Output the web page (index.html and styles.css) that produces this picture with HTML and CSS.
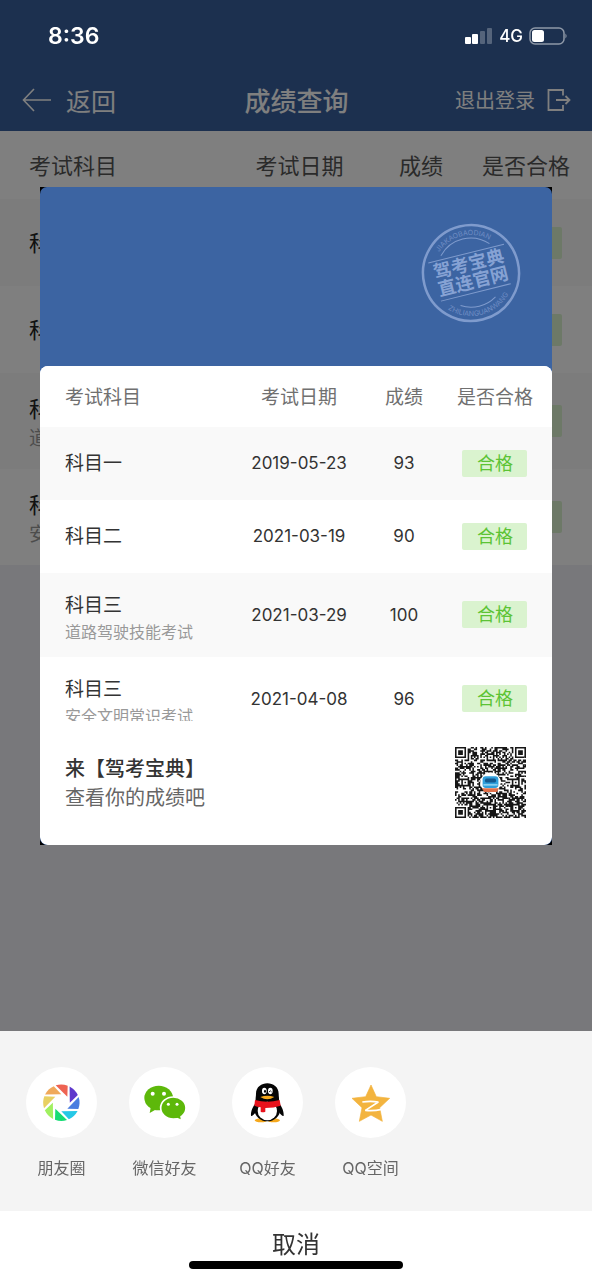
FILE: index.html
```html
<!DOCTYPE html>
<html lang="zh-CN">
<head>
<meta charset="utf-8">
<meta name="viewport" content="width=device-width, initial-scale=1">
<title>成绩查询</title>
<link rel="stylesheet" href="styles.css">
</head>
<body>
<div class="page">
  <header class="topbar">
    <div class="status">
      <span class="status-time">8:36</span>
      <div class="status-right">
        <svg class="signal" viewBox="0 0 28 18" aria-hidden="true">
          <rect x="0" y="10" width="6" height="7" rx="1" fill="#fff"/>
          <rect x="7" y="7" width="6" height="10" rx="1" fill="#fff"/>
          <rect x="15" y="4" width="5" height="13" rx="1" fill="#fff" opacity=".25"/>
          <rect x="22" y="1" width="5" height="16" rx="1" fill="#fff" opacity=".25"/>
        </svg>
        <span class="network">4G</span>
        <svg class="battery" viewBox="0 0 39 18" aria-hidden="true">
          <rect x="1" y="1" width="34" height="16" rx="5" fill="none" stroke="#fff" stroke-opacity=".5" stroke-width="1.5"/>
          <rect x="3" y="3" width="12" height="12" rx="2.5" fill="#fff"/>
          <path d="M36.5 6.5q2 2.500 0 5z" fill="#fff" opacity=".6"/>
        </svg>
      </div>
    </div>
    <nav class="nav">
      <a class="nav-back" href="#">
        <svg class="back-icon" viewBox="0 0 30 24" aria-hidden="true"><path d="M12 1 1.500 12 12 23M1.500 12H29" fill="none" stroke="currentColor" stroke-width="1.600"/></svg>
        返回
      </a>
      <h1 class="nav-title">成绩查询</h1>
      <a class="nav-exit" href="#">
        退出登录
        <svg class="exit-icon" viewBox="0 0 24 24" aria-hidden="true"><path d="M16 7.500V2H1.500v20H16v-5M9 12h13M18.500 8l4 4-4 4" fill="none" stroke="currentColor" stroke-width="1.800"/></svg>
      </a>
    </nav>
  </header>

  <table class="scores scores-page">
    <thead>
      <tr><th class="c-subject">考试科目</th><th class="c-date">考试日期</th><th class="c-score">成绩</th><th class="c-pass">是否合格</th></tr>
    </thead>
    <tbody>
      <tr><td>科目一</td><td>2019-05-23</td><td>93</td><td><span class="badge">合格</span></td></tr>
      <tr><td>科目二</td><td>2021-03-19</td><td>90</td><td><span class="badge">合格</span></td></tr>
      <tr class="tall"><td>科目三<small>道路驾驶技能考试</small></td><td>2021-03-29</td><td>100</td><td><span class="badge">合格</span></td></tr>
      <tr class="tall"><td>科目三<small>安全文明常识考试</small></td><td>2021-04-08</td><td>96</td><td><span class="badge">合格</span></td></tr>
    </tbody>
  </table>
</div>

<div class="overlay">
  <div class="stage">
    <section class="poster" aria-label="成绩单">
      <div class="poster-inner">
        <div class="poster-top">
          <svg class="stamp" viewBox="-50 -50 100 100" role="img" aria-label="驾考宝典 直连官网">
            <defs>
              <path id="arc-top" d="M-38 0A38 38 0 0 1 38 0"/>
              <path id="arc-bottom" d="M-43 0A43 43 0 0 0 43 0"/>
            </defs>
            <g transform="rotate(-14)">
              <circle r="48" fill="none" stroke="#7f9bcd" stroke-width="2.500"/>
              <path d="M-25 -24A34 34 0 0 1 25 -24M-18 29A34 34 0 0 0 18 29M-39 -20H39M-36 20H36" fill="none" stroke="#7f9bcd" stroke-width="1"/>
              <text class="stamp-text" y="-3">驾考宝典</text>
              <text class="stamp-text" y="15">直连官网</text>
              <text class="stamp-ring"><textPath href="#arc-top" startOffset="50%">JIAKAOBAODIAN</textPath></text>
              <text class="stamp-ring"><textPath href="#arc-bottom" startOffset="50%">ZHILIANGUANWANG</textPath></text>
            </g>
          </svg>
        </div>
        <div class="poster-card">
          <div class="poster-clip">
            <table class="scores scores-card">
              <thead>
                <tr><th class="c-subject">考试科目</th><th class="c-date">考试日期</th><th class="c-score">成绩</th><th class="c-pass">是否合格</th></tr>
              </thead>
              <tbody>
                <tr><td>科目一</td><td>2019-05-23</td><td>93</td><td><span class="badge">合格</span></td></tr>
                <tr><td>科目二</td><td>2021-03-19</td><td>90</td><td><span class="badge">合格</span></td></tr>
                <tr class="tall"><td>科目三<small>道路驾驶技能考试</small></td><td>2021-03-29</td><td>100</td><td><span class="badge">合格</span></td></tr>
                <tr class="tall"><td>科目三<small>安全文明常识考试</small></td><td>2021-04-08</td><td>96</td><td><span class="badge">合格</span></td></tr>
              </tbody>
            </table>
          </div>
          <div class="poster-foot">
            <div class="invite">
              <strong>来【驾考宝典】</strong>
              <span>查看你的成绩吧</span>
            </div>
            <svg class="qr" viewBox="0 0 45 45" role="img" aria-label="二维码">
              <path id="qr-modules" fill="#161616"/>
              <circle cx="22.500" cy="22.500" r="6.500" fill="#fff"/>
              <rect x="17.500" y="18.500" width="10" height="7.500" rx="2" fill="#2f9fdc"/>
              <rect x="19" y="20" width="7" height="2.500" rx="1" fill="#14598f"/>
              <rect x="18" y="23.500" width="9" height="1" fill="#8fd3f2"/>
              <path d="M17 26.200h11l-1.500 2.300h-8z" fill="#e0704a"/>
            </svg>
          </div>
        </div>
      </div>
    </section>
  </div>

  <section class="sheet" aria-label="分享">
    <div class="share-list">
      <button class="share" type="button">
        <span class="share-icon">
          <svg viewBox="0 0 213 213" aria-hidden="true">
            <defs><path id="blade" d="M-17 -52A55 55 0 0 1 19 -51L18 -18Z"/></defs>
            <g transform="translate(106 107)">
              <use href="#blade" fill="#ee6352"/>
              <use href="#blade" fill="#5e38cc" transform="rotate(45)"/>
              <use href="#blade" fill="#4a7de0" transform="rotate(90)"/>
              <use href="#blade" fill="#26c8e6" transform="rotate(135)"/>
              <use href="#blade" fill="#16dc74" transform="rotate(180)"/>
              <use href="#blade" fill="#a0f060" transform="rotate(225)"/>
              <use href="#blade" fill="#e8d062" transform="rotate(270)"/>
              <use href="#blade" fill="#f0a95a" transform="rotate(315)"/>
            </g>
          </svg>
        </span>
        朋友圈
      </button>
      <button class="share" type="button">
        <span class="share-icon">
          <svg viewBox="0 0 213 213" aria-hidden="true">
            <g fill="#5db80a">
              <path d="M66 118l-4 20 20-11z"/>
              <ellipse cx="89" cy="93" rx="43" ry="37"/>
              <ellipse cx="133" cy="123" rx="38" ry="33" stroke="#fff" stroke-width="5"/>
              <path d="M140 150l15 7-2-14z"/>
            </g>
            <g fill="#fff"><circle cx="71" cy="80" r="6"/><circle cx="105" cy="80" r="6"/><circle cx="118" cy="112" r="4.500"/><circle cx="144" cy="112" r="4.500"/></g>
          </svg>
        </span>
        微信好友
      </button>
      <button class="share" type="button">
        <span class="share-icon">
          <svg viewBox="0 0 213 213" aria-hidden="true">
            <ellipse cx="87" cy="160" rx="19" ry="6" fill="#f5a81c"/>
            <ellipse cx="125" cy="160" rx="19" ry="6" fill="#f5a81c"/>
            <path d="M72 108C62 118 56 134 57 146c2 3 8-3 13-9zM140 108c10 10 16 26 15 38-2 3-8-3-13-9z" fill="#050505"/>
            <ellipse cx="106" cy="126" rx="39" ry="37" fill="#050505"/>
            <path d="M71 104C70 94 72 88 72 80c0-42 68-42 68 0 0 8 2 14 1 24z" fill="#050505"/>
            <ellipse cx="106" cy="132" rx="29" ry="28" fill="#fff"/>
            <ellipse cx="97" cy="72" rx="7" ry="9.500" fill="#fff"/><ellipse cx="115" cy="72" rx="7" ry="9.500" fill="#fff"/>
            <ellipse cx="99" cy="73" rx="3" ry="4.500" fill="#050505"/><path d="M111 75q4-7 8 0" fill="none" stroke="#050505" stroke-width="2.500"/>
            <path d="M85 90q21-8 42 0-21 14-42 0z" fill="#f5a81c"/>
            <path d="M69 99q37 10 74 0l3 17q-20 7-46 7v11q-8 3-14 0v-13q-11-1-19-5z" fill="#e8121c"/>
          </svg>
        </span>
        QQ好友
      </button>
      <button class="share" type="button">
        <span class="share-icon">
          <svg viewBox="0 0 213 213" aria-hidden="true">
            <path d="M108 54l16 35 40 5-30 28 8 41-34-19-35 19 8-41-30-28 41-5z" fill="#f3b43f" stroke="#f3b43f" stroke-width="2" stroke-linejoin="round"/>
            <path d="M82 105q24-4 48 0L91 130q24 3 49-3" fill="none" stroke="#fff" stroke-width="5" stroke-linejoin="bevel"/>
          </svg>
        </span>
        QQ空间
      </button>
    </div>
    <button class="cancel" type="button">取消</button>
    <div class="home-indicator"></div>
  </section>
</div>
<script src="script.js"></script>
</body>
</html>
```

FILE: styles.css
```css
* { box-sizing: border-box; }

body {
  margin: 0;
  font-family: Inter, "Noto Sans CJK SC", sans-serif;
  color: #333;
}

a { color: inherit; text-decoration: none; }
button { border: 0; padding: 0; background: none; font: inherit; color: inherit; }
svg { display: block; }

.page { min-height: 100vh; background: #f0f0f6; }

/* top bar */
.topbar { background: #38609e; color: #fff; }

.status {
  position: relative;
  z-index: 2;
  display: flex;
  align-items: center;
  justify-content: space-between;
  height: 70px;
  padding: 2px 24px 0 48px;
}
.status-time { font-size: 23px; font-weight: 600; }
.status-right { display: flex; align-items: center; gap: 6px; }
.network { font-size: 17px; font-weight: 500; }
.signal { width: 28px; height: 18px; }
.battery { width: 39px; height: 18px; }

.nav {
  display: grid;
  grid-template-columns: 1fr auto 1fr;
  align-items: center;
  height: 61px;
  padding: 0 21px 2px 22px;
}
.nav-back { display: flex; align-items: center; gap: 14px; font-size: 25px; }
.back-icon { width: 30px; height: 24px; }
.nav-title { margin: 0; font-size: 26px; font-weight: 500; }
.nav-exit { display: flex; align-items: center; justify-content: flex-end; gap: 12px; font-size: 20px; }
.exit-icon { width: 24px; height: 24px; }

/* score tables */
.scores {
  width: 100%;
  table-layout: fixed;
  border-collapse: collapse;
  background: #fff;
  text-align: center;
}
.scores th, .scores td { padding: 0; font-weight: 400; }
.scores th { padding-bottom: 2px; }
.scores th:first-child, .scores td:first-child { text-align: left; }
.scores tbody tr:nth-child(odd) { background: #f9f9f9; }
.scores small { display: block; color: #999; }
.badge { display: inline-block; border-radius: 2px; background: #daf3cf; color: #5cc335; }

.scores-page { font-size: 22px; color: #222; }
.scores-page th { height: 68px; color: #555; }
.scores-page td { height: 87px; line-height: 30px; }
.scores-page .tall td { height: 96px; }
.scores-page th:first-child, .scores-page td:first-child { padding-left: 29px; }
.scores-page .tall td:first-child { padding-top: 6px; }
.scores-page small { font-size: 19px; line-height: 30px; }
.scores-page .badge { width: 73px; font-size: 20px; line-height: 32px; }

.scores-card { font-size: 19px; }
.scores-card th { height: 61px; color: #707070; }
.scores-card td { height: 73px; font-size: 17px; line-height: 26px; }
.scores-card .tall td { height: 84px; }
.scores-card th:first-child, .scores-card td:first-child { padding-left: 25px; font-size: 19px; }
.scores-card td:first-child { padding-top: 2px; }
.scores-card .tall td:first-child { padding-top: 8px; }
.scores-card small { font-size: 16px; line-height: 26px; }
.scores-card .badge { width: 65px; font-size: 18px; line-height: 27px; vertical-align: middle; }

.c-subject { width: 36.7%; }
.c-date { width: 27.8%; }
.c-score { width: 13.2%; }
.c-pass { width: 22.3%; }

/* dimmed layer with poster and share sheet */
.overlay {
  position: fixed;
  inset: 0;
  z-index: 1;
  display: flex;
  flex-direction: column;
  background: rgba(0, 0, 0, .5);
}
.stage { flex: 1; display: flex; align-items: center; padding: 0 40px; }

.poster { flex: 1; background: #000; }
.poster-inner { border-radius: 7px; background: #3c64a2; overflow: hidden; }
.poster-top { display: flex; justify-content: flex-end; padding: 36px 31px 43px; }
.stamp { width: 100px; height: 100px; }
.stamp-text { font-size: 18px; font-weight: 700; fill: #86a2d4; text-anchor: middle; }
.stamp-ring { font-size: 7px; fill: #6f8dc4; text-anchor: middle; }

.poster-card { border-radius: 8px; background: #fff; overflow: hidden; }
.poster-clip { max-height: 355px; overflow: hidden; }
.poster-foot {
  display: flex;
  align-items: center;
  justify-content: space-between;
  padding: 26px 26px 27px 25px;
}
.invite { display: flex; flex-direction: column; padding-top: 4px; font-size: 20px; line-height: 29px; color: #666; }
.invite strong { font-weight: 500; color: #333; }
.qr { width: 71px; height: 71px; }

.sheet { background: #fff; }
.share-list { display: flex; height: 180px; padding: 36px 10px 0; background: #f4f4f4; }
.share {
  display: flex;
  flex-direction: column;
  align-items: center;
  gap: 18px;
  width: 103px;
  font-size: 16px;
  line-height: 24px;
  color: #666;
}
.share-icon { width: 71px; height: 71px; border-radius: 50%; background: #fff; overflow: hidden; }
.cancel { display: block; width: 100%; padding-top: 18px; font-size: 24px; line-height: 32px; }
.home-indicator { width: 36%; height: 8px; margin: 0 auto 11px; border-radius: 4px; background: #000; }
```

FILE: script.js
```js
// Fills the QR graphic: 45 x 45 modules with finder, timing and alignment patterns.
(function () {
  var size = 45;
  var seed = 20210408;
  function random() {
    seed = (seed * 1103515245 + 12345) % 2147483648;
    return seed / 2147483648;
  }
  var grid = [];
  for (var y = 0; y < size; y++) {
    grid.push([]);
    for (var x = 0; x < size; x++) grid[y].push(random() < 0.55);
  }
  for (var i = 0; i < size; i++) {
    grid[6][i] = i % 2 === 0;
    grid[i][6] = i % 2 === 0;
  }
  function square(cx, cy, radius, isDark) {
    for (var dy = -radius; dy <= radius; dy++) {
      for (var dx = -radius; dx <= radius; dx++) {
        var row = grid[cy + dy];
        if (row && cx + dx >= 0 && cx + dx < size) {
          row[cx + dx] = isDark(Math.max(Math.abs(dx), Math.abs(dy)));
        }
      }
    }
  }
  [[3, 3], [41, 3], [3, 41]].forEach(function (p) {
    square(p[0], p[1], 4, function (d) { return d < 2 || d === 3; });
  });
  [[22, 6], [6, 22], [38, 22], [22, 38], [38, 38]].forEach(function (p) {
    square(p[0], p[1], 2, function (d) { return d !== 1; });
  });
  var d = "";
  grid.forEach(function (row, y) {
    row.forEach(function (dark, x) {
      if (dark) d += "M" + x + " " + y + "h1v1h-1z";
    });
  });
  document.getElementById("qr-modules").setAttribute("d", d);
})();
```
